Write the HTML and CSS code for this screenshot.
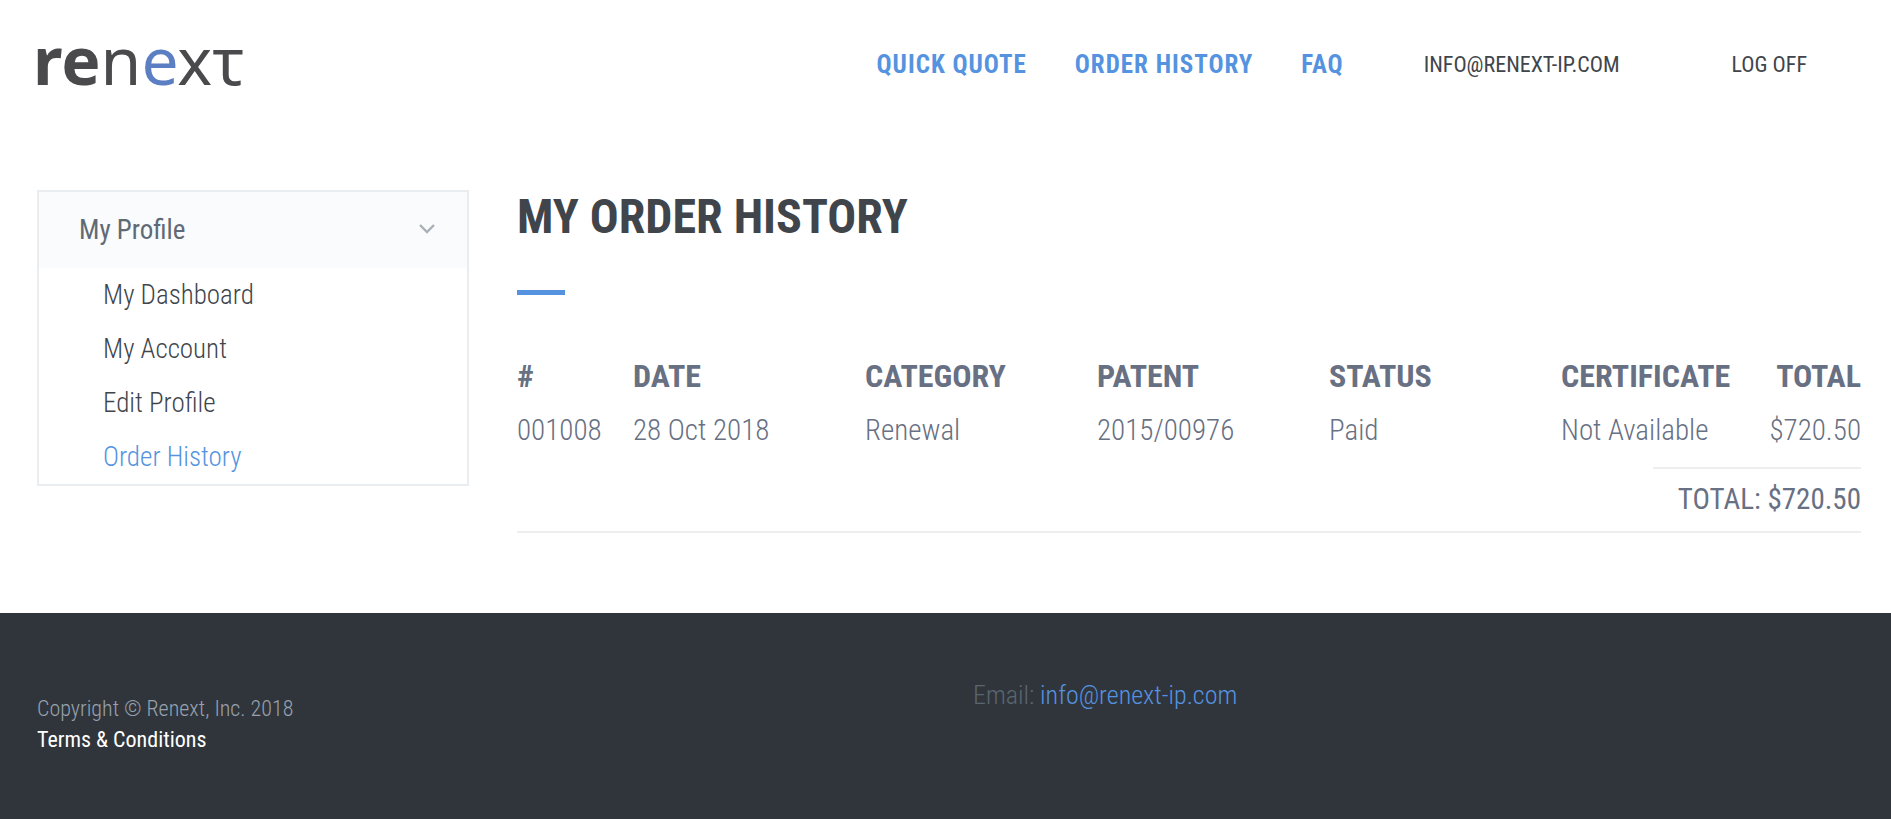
FILE: index.html
```html
<!DOCTYPE html>
<html lang="en">
<head>
    <meta charset="UTF-8">
    <meta name="viewport" content="width=device-width, initial-scale=1.0">
    <title>My Order History</title>
    <link rel="stylesheet" href="styles.css">
</head>
<body>
    <header class="header">
        <a href="#" class="logo" aria-label="renext"><b>re</b>n<span class="logo-accent">e</span>xτ</a>
        <nav class="nav">
            <a href="#" class="nav-link">Quick Quote</a>
            <a href="#" class="nav-link">Order History</a>
            <a href="#" class="nav-link">FAQ</a>
            <a href="#" class="nav-user">info@renext-ip.com</a>
            <a href="#" class="nav-logoff">Log Off</a>
        </nav>
    </header>

    <main class="container">
        <aside class="sidebar">
            <button type="button" class="sidebar-toggle">
                My Profile
                <svg class="chevron" viewBox="0 0 16 12" aria-hidden="true">
                    <path d="M1 1 L8 8 L15 1" fill="none" stroke="#a9b0b8" stroke-width="2.4"/>
                </svg>
            </button>
            <ul class="sidebar-menu">
                <li><a href="#">My Dashboard</a></li>
                <li><a href="#">My Account</a></li>
                <li><a href="#">Edit Profile</a></li>
                <li><a href="#" class="active">Order History</a></li>
            </ul>
        </aside>

        <section class="content">
            <h1>My Order History</h1>
            <div class="title-line"></div>
            <table class="orders">
                <thead>
                    <tr>
                        <th class="col-id">#</th>
                        <th class="col">Date</th>
                        <th class="col">Category</th>
                        <th class="col">Patent</th>
                        <th class="col">Status</th>
                        <th class="col-cert">Certificate</th>
                        <th class="col-total">Total</th>
                    </tr>
                </thead>
                <tbody>
                    <tr>
                        <td>001008</td>
                        <td>28 Oct 2018</td>
                        <td>Renewal</td>
                        <td>2015/00976</td>
                        <td>Paid</td>
                        <td>Not Available</td>
                        <td class="col-total">$720.50</td>
                    </tr>
                </tbody>
            </table>
            <div class="summary">
                <p class="summary-total">TOTAL: $720.50</p>
            </div>
        </section>
    </main>

    <footer class="footer">
        <div class="footer-copy">
            <p>Copyright © Renext, Inc. 2018</p>
            <a href="#">Terms &amp; Conditions</a>
        </div>
        <p class="footer-email">Email: <a href="#">info@renext-ip.com</a></p>
    </footer>
</body>
</html>
```
FILE: styles.css
```css
* {
    box-sizing: border-box;
}

body {
    margin: 0;
    min-height: 100vh;
    display: flex;
    flex-direction: column;
    font-family: "Roboto Condensed", Roboto, "Liberation Sans", sans-serif;
    font-weight: 300;
    color: #687083;
    background-color: #fff;
}

a {
    color: inherit;
    text-decoration: none;
}

p {
    margin: 0;
}

/* Header */
.header {
    display: flex;
    justify-content: space-between;
    align-items: center;
    height: 126px;
    padding: 0 84px 0 33px;
}

.logo {
    padding-bottom: 8px;
    font-family: "Noto Sans", sans-serif;
    font-size: 66px;
    font-weight: 400;
    line-height: 90px;
    color: #4a4a4c;
}

.logo-accent {
    color: #5b7fc2;
}

.nav {
    display: flex;
    align-items: center;
    padding-top: 2px;
    text-transform: uppercase;
    white-space: nowrap;
}

.nav-link {
    margin-right: 48px;
    font-size: 25px;
    font-weight: 700;
    letter-spacing: 1px;
    color: #5593e0;
}

.nav-user,
.nav-logoff {
    font-size: 22px;
    font-weight: 400;
    color: #40454b;
}

.nav-user {
    margin: 0 112px 0 32px;
}

/* Page body */
.container {
    display: grid;
    grid-template-columns: 9fr 28fr;
    gap: 48px;
    align-items: start;
    padding: 64px 30px 80px 37px;
}

.sidebar {
    border: 2px solid #e9edf0;
}

.sidebar-toggle {
    display: flex;
    justify-content: space-between;
    align-items: center;
    width: 100%;
    height: 76px;
    padding: 0 32px 0 40px;
    border: none;
    background-color: #fafbfd;
    font-family: inherit;
    font-size: 27px;
    font-weight: 400;
    color: #606a75;
    cursor: pointer;
}

.chevron {
    width: 16px;
    height: 12px;
}

.sidebar-menu {
    margin: 0;
    padding: 0 0 0 64px;
    list-style: none;
    font-size: 27px;
    line-height: 54px;
    color: #40454b;
}

.sidebar-menu .active {
    color: #5593e0;
}

h1 {
    margin: 0;
    font-size: 48px;
    font-weight: 700;
    line-height: 54px;
    text-transform: uppercase;
    color: #40454b;
}

.title-line {
    width: 48px;
    height: 5px;
    margin: 46px 0 54px;
    background-color: #5593e0;
}

/* Orders table */
.orders {
    width: 100%;
    table-layout: fixed;
    border-collapse: collapse;
    font-size: 29px;
    line-height: 54px;
    text-align: left;
    white-space: nowrap;
}

.orders th,
.orders td {
    padding: 0;
}

.orders th {
    font-size: 32px;
    font-weight: 700;
    text-transform: uppercase;
}

.orders .col-id {
    width: 116px;
}

.orders .col {
    width: 232px;
}

.orders .col-total {
    width: 100px;
    text-align: right;
}

.summary {
    display: flex;
    justify-content: flex-end;
    padding: 10px 0 2px;
    border-bottom: 2px solid #eee;
}

.summary-total {
    width: 208px;
    border-top: 2px solid #eee;
    font-size: 29px;
    font-weight: 400;
    line-height: 60px;
    text-align: right;
    white-space: nowrap;
}

/* Footer */
.footer {
    flex-grow: 1;
    display: grid;
    grid-template-columns: 1fr 1fr;
    gap: 48px;
    align-items: start;
    padding: 62px 30px 62px 37px;
    background-color: #30353c;
}

.footer-copy {
    padding-top: 18px;
    font-size: 22px;
    line-height: 31px;
    color: #98a2ae;
}

.footer-copy a {
    font-weight: 400;
    color: #fff;
}

.footer-email {
    font-size: 26px;
    line-height: 40px;
    color: #5a666f;
}

.footer-email a {
    color: #5593e0;
}
```
